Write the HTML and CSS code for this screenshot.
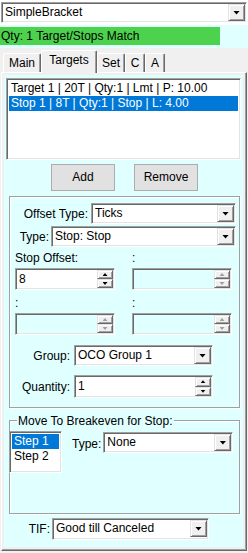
FILE: index.html
```html
<!DOCTYPE html>
<html>
<head>
<meta charset="utf-8">
<link rel="stylesheet" href="styles.css">
</head>
<body>
<div class="app">
  <div class="top">
    <div class="combo combo-main"><span class="val">SimpleBracket</span><span class="dd"></span></div>
  </div>
  <div class="status"><div class="match">Qty: 1 Target/Stops Match</div></div>
  <div class="tabstrip">
    <div class="tab t-main">Main</div>
    <div class="tab sel t-targets">Targets</div>
    <div class="tab t-set">Set</div>
    <div class="tab t-c">C</div>
    <div class="tab t-a">A</div>
  </div>
  <div class="tabctl">
    <div class="tabpage">
      <div class="list targets">
        <div class="item">Target 1 | 20T | Qty:1 | Lmt | P: 10.00</div>
        <div class="item selitem">Stop 1 | 8T | Qty:1 | Stop | L: 4.00</div>
      </div>
      <div class="btnrow">
        <div class="btn">Add</div>
        <div class="btn">Remove</div>
      </div>
      <div class="panel">
        <div class="row r-offset">
          <span class="lbl">Offset Type:</span>
          <div class="combo c-offset"><span class="val">Ticks</span><span class="dd"></span></div>
        </div>
        <div class="row r-type">
          <span class="lbl">Type:</span>
          <div class="combo c-type"><span class="val">Stop: Stop</span><span class="dd"></span></div>
        </div>
        <div class="grid2">
          <div class="cell">
            <div class="cap">Stop Offset:</div>
            <div class="num"><span class="val">8</span><span class="spin"><span class="sb up"></span><span class="sb down"></span></span></div>
          </div>
          <div class="cell">
            <div class="cap">:</div>
            <div class="num dis"><span class="val"></span><span class="spin"><span class="sb up"></span><span class="sb down"></span></span></div>
          </div>
          <div class="cell">
            <div class="cap cap2">:</div>
            <div class="num dis"><span class="val"></span><span class="spin"><span class="sb up"></span><span class="sb down"></span></span></div>
          </div>
          <div class="cell">
            <div class="cap cap2">:</div>
            <div class="num dis"><span class="val"></span><span class="spin"><span class="sb up"></span><span class="sb down"></span></span></div>
          </div>
        </div>
        <div class="row r-group">
          <span class="lbl">Group:</span>
          <div class="combo c-group"><span class="val">OCO Group 1</span><span class="dd"></span></div>
        </div>
        <div class="row r-qty">
          <span class="lbl">Quantity:</span>
          <div class="num n-qty"><span class="val">1</span><span class="spin"><span class="sb up"></span><span class="sb down"></span></span></div>
        </div>
      </div>
      <div class="grp">
        <div class="grp-title">Move To Breakeven for Stop:</div>
        <div class="grp-body">
          <div class="list steps">
            <div class="item selitem">Step 1</div>
            <div class="item">Step 2</div>
          </div>
          <span class="lbl l-btype">Type:</span>
          <div class="combo c-btype"><span class="val">None</span><span class="dd"></span></div>
        </div>
      </div>
      <div class="row r-tif">
        <span class="lbl">TIF:</span>
        <div class="combo c-tif"><span class="val">Good till Canceled</span><span class="dd"></span></div>
      </div>
    </div>
  </div>
</div>
</body>
</html>
```
FILE: styles.css
```css
* { box-sizing: border-box; }
html, body { margin: 0; padding: 0; }
body {
  width: 248px; height: 553px; overflow: hidden;
  background: #f0f0f0;
  font-family: "Liberation Sans", Arial, sans-serif;
  font-size: 12px; color: #000;
}
.app { width: 248px; height: 553px; display: flex; flex-direction: column; }

/* sunken field */
.combo, .num, .list {
  background: #fff;
  border: 1px solid;
  border-color: #a0a0a0 #fff #fff #a0a0a0;
  box-shadow: inset 1px 1px #696969, inset -1px -1px #e3e3e3;
}
.combo { display: flex; height: 21px; padding: 1px; }
.combo .val { flex: 1; padding-left: 2px; line-height: 17px; white-space: nowrap; overflow: hidden; }
.dd {
  width: 17px; height: 17px; flex: none;
  background: #f0f0f0;
  border: 1px solid; border-color: #e3e3e3 #696969 #696969 #e3e3e3;
  box-shadow: inset 1px 1px #fff, inset -1px -1px #a0a0a0;
  display: flex; align-items: center; justify-content: center;
}
.dd::after {
  content: ""; width: 7px; height: 4px; background: #000;
  clip-path: polygon(0 0, 100% 0, 50% 100%);
}

.num { display: flex; height: 22px; padding: 1px; }
.num .val { flex: 1; padding-left: 2px; line-height: 19px; }
.num.dis { background: #e0ffff; }
.spin { width: 16px; display: flex; flex-direction: column; }
.sb {
  flex: 1; background: #f0f0f0;
  border: 1px solid; border-color: #e3e3e3 #696969 #696969 #e3e3e3;
  box-shadow: inset 1px 1px #fff, inset -1px -1px #a0a0a0;
  display: flex; align-items: center; justify-content: center;
}
.sb::after { content: ""; width: 5px; height: 3px; background: #000; }
.sb.up::after { clip-path: polygon(50% 0, 100% 100%, 0 100%); }
.sb.down::after { clip-path: polygon(0 0, 100% 0, 50% 100%); }
.dis .sb::after { background: #a0a0a0; }

/* top */
.top { height: 25px; background: #fff; padding: 2px 0 0 1px; }
.combo-main { width: 246px; }
.status { height: 23px; background: #e0ffff; padding-top: 2px; }
.match { width: 220px; height: 18px; background: #4cd24c; line-height: 18px; padding-left: 1px; }

/* tabs */
.tabstrip { height: 24px; display: flex; align-items: flex-end; padding-left: 3px; }
.tab {
  height: 19px; background: #f0f0f0;
  border-top: 1px solid #fff; border-left: 1px solid #fff;
  border-right: 1px solid #696969;
  box-shadow: inset -1px 0 #a0a0a0;
  border-top-left-radius: 2px; border-top-right-radius: 2px;
  text-align: center; line-height: 18px;
}
.tab.sel { line-height: 19px; position: relative; z-index: 1; margin-bottom: -1px; height: 23px; }
.t-main { width: 38px; }
.t-targets { width: 56px; }
.t-set { width: 28px; }
.t-c { width: 20px; }
.t-a { width: 20px; }

.tabctl {
  margin-left: 1px; width: 246px; height: 479px;
  border: 1px solid; border-color: #fff #696969 #696969 #fff;
  box-shadow: inset -1px -1px #a0a0a0;
  padding: 2px 3px 3px 2px;
}
.tabpage { width: 100%; height: 100%; background: #e0ffff; padding-top: 3px; }

/* list */
.list { padding: 2px; }
.item { height: 15px; line-height: 15px; padding-left: 2px; white-space: nowrap; }
.selitem { background: #0078d7; color: #fff; }
.targets { margin-left: 2px; width: 235px; height: 82px; }

.btnrow { display: flex; gap: 19px; margin: 4px 0 0 47px; }
.btn {
  width: 64px; height: 27px; background: #e1e1e1; border: 1px solid #adadad;
  text-align: center; line-height: 25px;
}

.panel {
  margin: 5px 0 0 5px; width: 231px; height: 212px;
  border: 1px solid #a0a0a0; box-shadow: inset 1px 1px #fff, 1px 1px #fff;
}
.row { display: flex; align-items: center; }
.lbl { text-align: right; white-space: nowrap; }
.r-offset { margin-top: 6px; }
.r-offset .lbl { width: 78px; margin-right: 3px; }
.c-offset { width: 145px; }
.r-type { margin-top: 2px; }
.r-type .lbl { width: 39px; margin-right: 2px; }
.c-type { width: 185px; }

.grid2 { display: grid; grid-template-columns: 100px 100px; column-gap: 17px; padding-left: 5px; margin-top: 4px; }
.cap { height: 14px; line-height: 14px; margin-bottom: 3px; }
.cap2 { margin-top: 6px; }
.grid2 .num { height: 22px; }

.r-group { margin-top: 10px; }
.r-group .lbl { width: 60px; margin-right: 4px; }
.c-group { width: 139px; }
.r-qty { margin-top: 9px; }
.r-qty .lbl { width: 60px; margin-right: 4px; }
.n-qty { width: 139px; height: 23px; }

.grp {
  margin: 12px 0 0 5px; width: 231px; height: 94px;
  border: 1px solid #a0a0a0; box-shadow: inset 1px 1px #fff, 1px 1px #fff;
}
.grp-title {
  display: inline-block; margin: -7px 0 0 7px; padding: 0 1px;
  background: #e0ffff; line-height: 14px; vertical-align: top;
}
.grp-body { display: flex; align-items: flex-start; margin-top: -4px; }
.steps { margin-left: -1px; width: 53px; height: 42px; }
.steps .item { padding-left: 2px; }
.l-btype { margin: 6px 2px 0 10px; line-height: 14px; }
.c-btype { width: 130px; margin-top: 1px; }

.r-tif { margin-top: 4px; }
.r-tif .lbl { width: 46px; margin-right: 2px; }
.c-tif { width: 157px; height: 22px; }
```
